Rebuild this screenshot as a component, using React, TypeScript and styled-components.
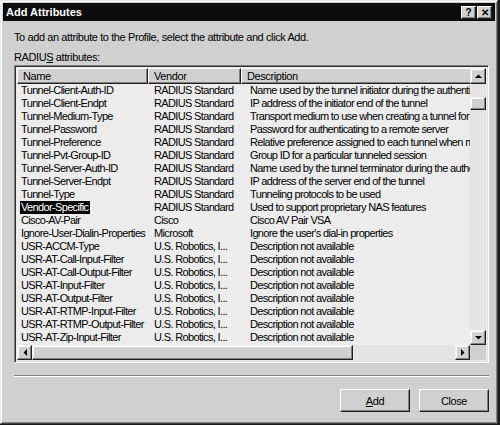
import React from "react";
import styled, { createGlobalStyle } from "styled-components";

const Global = createGlobalStyle`
  html, body { margin: 0; padding: 0; background: #1a1a1a; }
  body { width: 500px; height: 425px; overflow: hidden; font-family: "Liberation Sans", Arial, sans-serif; }
`;

const Dialog = styled.div`
  box-sizing: border-box;
  width: 498px;
  height: 424px;
  background: #d0d0d0;
  border-top: 1px solid #e8e8e8;
  border-left: 1px solid #e8e8e8;
  border-right: 1px solid #404040;
  border-bottom: 1px solid #404040;
  box-shadow: inset 1px 1px 0 #ffffff, inset -1px -1px 0 #808080;
  padding: 2px;
  display: flex;
  flex-direction: column;
`;

const TitleBar = styled.div`
  height: 18px;
  background: #0d0d0d;
  display: flex;
  align-items: center;
  padding: 0 3px 0 3px;
  color: #ffffff;
  font-weight: bold;
  font-size: 11px;
`;

const TitleText = styled.div`
  flex: 1;
`;

const CapButton = styled.div<{ $gap?: number }>`
  box-sizing: border-box;
  width: 15px;
  height: 13px;
  background: #d0d0d0;
  border-top: 1px solid #ffffff;
  border-left: 1px solid #ffffff;
  border-right: 1px solid #202020;
  border-bottom: 1px solid #202020;
  box-shadow: inset -1px -1px 0 #808080;
  display: flex;
  align-items: center;
  justify-content: center;
  color: #000;
  font-size: 10px;
  font-weight: bold;
  margin-left: ${(p) => p.$gap ?? 0}px;
`;

const Body = styled.div`
  flex: 1;
  display: flex;
  flex-direction: column;
  padding: 9px 8px 0 11px;
  font-size: 11px;
  letter-spacing: -0.4px;
  color: #000;
`;

const Intro = styled.div`
  height: 14px;
  line-height: 14px;
`;

const Label = styled.div`
  margin-top: 6px;
  height: 14px;
  line-height: 14px;
`;

const ListBox = styled.div`
  box-sizing: border-box;
  margin-top: 1px;
  width: 475px;
  height: 298px;
  border-top: 1px solid #808080;
  border-left: 1px solid #808080;
  border-right: 1px solid #ffffff;
  border-bottom: 1px solid #ffffff;
  box-shadow: inset 1px 1px 0 #303030, inset -1px -1px 0 #e0e0e0;
  padding: 2px;
  display: grid;
  grid-template-columns: 1fr 16px;
  grid-template-rows: 1fr 15px;
  background: #ececec;
  letter-spacing: -0.65px;
`;

const View = styled.div`
  overflow: hidden;
  background: #ececec;
`;

const HeaderRow = styled.div`
  display: flex;
  height: 16px;
  width: 700px;
  letter-spacing: -0.4px;
`;

const HeaderCell = styled.div<{ $w: number }>`
  box-sizing: border-box;
  width: ${(p) => p.$w}px;
  flex: none;
  height: 16px;
  line-height: 14px;
  padding-left: 5px;
  background: #d0d0d0;
  border-top: 1px solid #ffffff;
  border-left: 1px solid #ffffff;
  border-right: 1px solid #202020;
  border-bottom: 1px solid #202020;
  box-shadow: inset -1px -1px 0 #808080;
  white-space: nowrap;
  overflow: hidden;
`;

const Row = styled.div`
  display: flex;
  height: 13px;
  line-height: 13px;
  width: 700px;
`;

const Cell = styled.div<{ $w: number; $pad: number }>`
  width: ${(p) => p.$w}px;
  flex: none;
  padding-left: ${(p) => p.$pad}px;
  box-sizing: border-box;
  white-space: nowrap;
  overflow: hidden;
`;

const Sel = styled.span<{ $on: boolean }>`
  display: inline-block;
  padding: 0 2px 0 1px;
  margin-left: -1px;
  background: ${(p) => (p.$on ? "#050505" : "transparent")};
  color: ${(p) => (p.$on ? "#ffffff" : "#000000")};
`;

const VScroll = styled.div`
  display: flex;
  flex-direction: column;
  background: #e4e4e4;
`;

const HScroll = styled.div`
  display: flex;
  background: #e4e4e4;
`;

const Corner = styled.div`
  background: #d0d0d0;
`;

const ArrowBtn = styled.div<{ $w: number; $h: number; $mt?: number }>`
  box-sizing: border-box;
  width: ${(p) => p.$w}px;
  height: ${(p) => p.$h}px;
  margin-top: ${(p) => p.$mt ?? 0}px;
  flex: none;
  background: #d0d0d0;
  border-top: 1px solid #f0f0f0;
  border-left: 1px solid #f0f0f0;
  border-right: 1px solid #202020;
  border-bottom: 1px solid #202020;
  box-shadow: inset -1px -1px 0 #808080, inset 1px 1px 0 #ffffff;
  display: flex;
  align-items: center;
  justify-content: center;
`;

const Track = styled.div`
  flex: 1;
`;

const Separator = styled.div`
  margin-top: 12px;
  width: 475px;
  height: 0;
  border-top: 1px solid #808080;
  border-bottom: 1px solid #ffffff;
`;

const Buttons = styled.div`
  display: flex;
  justify-content: flex-end;
  gap: 9px;
  margin-top: 12px;
  width: 475px;
`;

const PushButton = styled.div`
  box-sizing: border-box;
  width: 70px;
  height: 23px;
  background: #d0d0d0;
  border-top: 1px solid #ffffff;
  border-left: 1px solid #ffffff;
  border-right: 1px solid #202020;
  border-bottom: 1px solid #202020;
  box-shadow: inset -1px -1px 0 #808080;
  display: flex;
  align-items: center;
  justify-content: center;
  font-size: 11px;
`;

const Tri = ({ dir }: { dir: "up" | "down" | "left" | "right" }) => {
  const pts = {
    up: "0,4 7,4 3.5,0.5",
    down: "0,0 7,0 3.5,3.5",
    left: "4,0 4,7 0.5,3.5",
    right: "0,0 0,7 3.5,3.5",
  }[dir];
  const w = dir === "up" || dir === "down" ? 7 : 4;
  const h = dir === "up" || dir === "down" ? 4 : 7;
  return (
    <svg width={w} height={h} viewBox={`0 0 ${w} ${h}`}>
      <polygon points={pts} fill="#000" />
    </svg>
  );
};

const rows: [string, string, string][] = [
  ["Tunnel-Client-Auth-ID", "RADIUS Standard", "Name used by the tunnel initiator during the authentication phase"],
  ["Tunnel-Client-Endpt", "RADIUS Standard", "IP address of the initiator end of the tunnel"],
  ["Tunnel-Medium-Type", "RADIUS Standard", "Transport medium to use when creating a tunnel for protocols"],
  ["Tunnel-Password", "RADIUS Standard", "Password for authenticating to a remote server"],
  ["Tunnel-Preference", "RADIUS Standard", "Relative preference assigned to each tunnel when more than one"],
  ["Tunnel-Pvt-Group-ID", "RADIUS Standard", "Group ID for a particular tunneled session"],
  ["Tunnel-Server-Auth-ID", "RADIUS Standard", "Name used by the tunnel terminator during the authentication"],
  ["Tunnel-Server-Endpt", "RADIUS Standard", "IP address of the server end of the tunnel"],
  ["Tunnel-Type", "RADIUS Standard", "Tunneling protocols to be used"],
  ["Vendor-Specific", "RADIUS Standard", "Used to support proprietary NAS features"],
  ["Cisco-AV-Pair", "Cisco", "Cisco AV Pair VSA"],
  ["Ignore-User-Dialin-Properties", "Microsoft", "Ignore the user's dial-in properties"],
  ["USR-ACCM-Type", "U.S. Robotics, I...", "Description not available"],
  ["USR-AT-Call-Input-Filter", "U.S. Robotics, I...", "Description not available"],
  ["USR-AT-Call-Output-Filter", "U.S. Robotics, I...", "Description not available"],
  ["USR-AT-Input-Filter", "U.S. Robotics, I...", "Description not available"],
  ["USR-AT-Output-Filter", "U.S. Robotics, I...", "Description not available"],
  ["USR-AT-RTMP-Input-Filter", "U.S. Robotics, I...", "Description not available"],
  ["USR-AT-RTMP-Output-Filter", "U.S. Robotics, I...", "Description not available"],
  ["USR-AT-Zip-Input-Filter", "U.S. Robotics, I...", "Description not available"],
];

export default function App() {
  return (
    <>
      <Global />
      <Dialog>
        <TitleBar>
          <TitleText>Add Attributes</TitleText>
          <CapButton>?</CapButton>
          <CapButton $gap={1}>✕</CapButton>
        </TitleBar>
        <Body>
          <Intro>To add an attribute to the Profile, select the attribute and click Add.</Intro>
          <Label>
            RADIU<u>S</u> attributes:
          </Label>
          <ListBox>
            <View>
              <HeaderRow>
                <HeaderCell $w={131}>Name</HeaderCell>
                <HeaderCell $w={93}>Vendor</HeaderCell>
                <HeaderCell $w={300}>Description</HeaderCell>
              </HeaderRow>
              {rows.map(([n, v, d], i) => (
                <Row key={n}>
                  <Cell $w={131} $pad={4}>
                    <Sel $on={i === 9}>{n}</Sel>
                  </Cell>
                  <Cell $w={93} $pad={6}>{v}</Cell>
                  <Cell $w={400} $pad={9}>{d}</Cell>
                </Row>
              ))}
            </View>
            <VScroll>
              <ArrowBtn $w={16} $h={16}>
                <Tri dir="up" />
              </ArrowBtn>
              <ArrowBtn $w={16} $h={13} $mt={13} />
              <Track />
              <ArrowBtn $w={16} $h={15}>
                <Tri dir="down" />
              </ArrowBtn>
            </VScroll>
            <HScroll>
              <ArrowBtn $w={15} $h={15}>
                <Tri dir="left" />
              </ArrowBtn>
              <ArrowBtn $w={321} $h={15} />
              <Track />
              <ArrowBtn $w={15} $h={15}>
                <Tri dir="right" />
              </ArrowBtn>
            </HScroll>
            <Corner />
          </ListBox>
          <Separator />
          <Buttons>
            <PushButton>
              <span>
                <u>A</u>dd
              </span>
            </PushButton>
            <PushButton>Close</PushButton>
          </Buttons>
        </Body>
      </Dialog>
    </>
  );
}
